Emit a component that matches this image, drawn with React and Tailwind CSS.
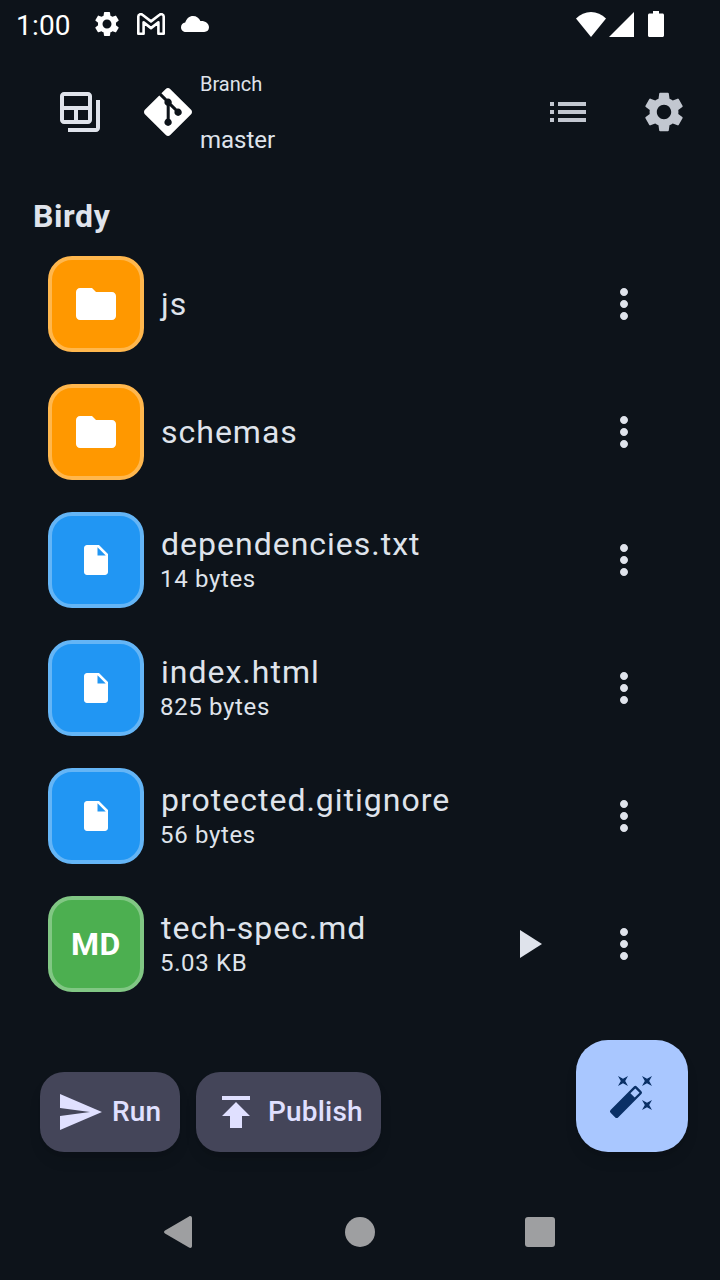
import React from 'react';
import {
  MdAutoFixHigh,
  MdFolder,
  MdInsertDriveFile,
  MdList,
  MdMoreVert,
  MdOutlineBackupTable,
  MdPlayArrow,
  MdPublish,
  MdSend,
  MdSettings
} from 'react-icons/md';
import { SiGit } from 'react-icons/si';

const files = [
  { name: 'js', type: 'folder' },
  { name: 'schemas', type: 'folder' },
  { name: 'dependencies.txt', type: 'file', size: '14 bytes' },
  { name: 'index.html', type: 'file', size: '825 bytes' },
  { name: 'protected.gitignore', type: 'file', size: '56 bytes' },
  { name: 'tech-spec.md', type: 'markdown', size: '5.03 KB' }
];

const tileStyles = {
  folder: 'bg-[#ff9800] border-[#ffb74d]',
  file: 'bg-[#2196f3] border-[#64b5f6]',
  markdown: 'bg-[#4caf50] border-[#81c784]'
};

function StatusBar() {
  return (
    <div className="flex h-12 items-center justify-between pl-4 pr-[55px] text-white">
      <div className="flex items-center">
        <span className="w-[76px] pt-1 text-[28px] leading-10 tracking-[0.2px]">1:00</span>
        <MdSettings size={30} />
        <svg className="ml-[15px]" width="28" height="22" viewBox="0 0 28 22" fill="none" stroke="currentColor" strokeWidth="2.6" strokeLinejoin="round">
          <path d="M1.3 3.6C1.3 1.3 3.8.5 5.4 1.8L14 8.4l8.6-6.6c1.6-1.3 4.1-.5 4.1 1.8v17.1h-5.3V9.4L14 15.1 6.6 9.4v11.3H1.3z" />
        </svg>
        <svg className="ml-4" width="28" height="16" viewBox="0 0 28 16" fill="currentColor">
          <path d="M5 16C2.2 16 0 13.9 0 11.2c0-2.5 1.8-4.4 4.2-4.7C5.4 2.7 8.4 0 12 0c3.5 0 6.2 2 7.4 5.1C24.3 4.8 28 7.4 28 11.3 28 14.1 26 16 23.2 16z" />
        </svg>
      </div>
      <div className="flex items-center">
        <svg width="30" height="25" viewBox="0 0 30 25" fill="currentColor">
          <path d="M15 25 0 6.5C4.2 2.3 9.4 0 15 0s10.8 2.3 15 6.5z" />
        </svg>
        <svg className="ml-[3px]" width="25" height="25" viewBox="0 0 25 25" fill="currentColor">
          <path d="M25 0v25H0z" />
        </svg>
        <svg className="ml-3.5 mr-px" width="16" height="26" viewBox="0 0 16 26" fill="currentColor">
          <path d="M5 0h6v2.5h3.5c.8 0 1.5.7 1.5 1.5v20.5c0 .8-.7 1.5-1.5 1.5h-13C.7 26 0 25.3 0 24.500V4c0-.8.7-1.5 1.5-1.5H5z" />
        </svg>
      </div>
    </div>
  );
}

function Header() {
  return (
    <header className="flex h-32 items-center pl-14 pr-8">
      <MdOutlineBackupTable size={48} className="text-[#dfe3eb]" />
      <SiGit size={48} className="ml-10 text-white" />
      <div className="ml-2 flex flex-col gap-6 text-[#dfe3eb]">
        <span className="text-xl leading-8">Branch</span>
        <span className="text-2xl leading-8">master</span>
      </div>
      <div className="ml-auto flex gap-12 text-[#c2c7d0]">
        <MdList size={48} />
        <MdSettings size={48} />
      </div>
    </header>
  );
}

function FileTile({ type }) {
  return (
    <div className={`flex h-24 w-24 items-center justify-center rounded-3xl border-4 text-white ${tileStyles[type]}`}>
      {type === 'folder' && <MdFolder size={48} />}
      {type === 'file' && <MdInsertDriveFile size={36} />}
      {type === 'markdown' && <span className="text-[32px] font-bold tracking-[0.5px]">MD</span>}
    </div>
  );
}

function FileRow({ file }) {
  return (
    <li className="flex h-24 items-center pl-12 pr-18">
      <FileTile type={file.type} />
      <div className="ml-4 flex flex-col">
        <span className="pl-px text-[32px] leading-10 tracking-[1px]">{file.name}</span>
        {file.size && <span className="pb-0.5 text-2xl leading-[30px] tracking-[0.65px]">{file.size}</span>}
      </div>
      <div className="ml-auto flex gap-12">
        {file.type === 'markdown' && <MdPlayArrow size={48} />}
        <MdMoreVert size={48} />
      </div>
    </li>
  );
}

function Actions() {
  return (
    <div className="flex items-end pt-12 pb-8 pl-10 pr-8">
      <button className="flex h-20 w-[140px] items-center gap-2 rounded-3xl bg-[#444559] pl-4 text-[28px] font-medium tracking-[0.2px] text-[#e0e0ff] shadow-lg">
        <MdSend size={48} />
        Run
      </button>
      <button className="ml-4 flex h-20 w-[185px] items-center gap-2 rounded-3xl bg-[#444559] pl-4 text-[28px] font-medium tracking-[0.2px] text-[#e0e0ff] shadow-lg">
        <MdPublish size={48} />
        Publish
      </button>
      <button className="ml-auto flex h-28 w-28 items-center justify-center rounded-[32px] bg-[#a9c7ff] text-[#0a3066] shadow-lg">
        <MdAutoFixHigh size={48} />
      </button>
    </div>
  );
}

function NavBar() {
  return (
    <nav className="flex h-24 items-center pl-[164px] text-[#9e9fa1]">
      <svg width="28" height="32" viewBox="0 0 28 32" fill="currentColor">
        <path d="M25 .4c1.5-.9 3-.1 3 1.6v28c0 1.7-1.5 2.5-3 1.6L1 17.5c-1.3-.8-1.3-2.2 0-3z" />
      </svg>
      <div className="ml-[153px] h-[30px] w-[30px] rounded-full bg-[#9e9fa1]"></div>
      <div className="ml-[150px] h-[30px] w-[30px] rounded-[3px] bg-[#9e9fa1]"></div>
    </nav>
  );
}

function App() {
  return (
    <div className="h-[1280px] w-[720px] overflow-hidden bg-[#0d131a] font-[Roboto,sans-serif] text-[#dfe3eb]">
      <StatusBar />
      <Header />
      <h1 className="flex h-20 items-center pl-[33px] text-[32px] font-bold tracking-[0.6px]">Birdy</h1>
      <ul className="flex flex-col gap-8">
        {files.map(file => (
          <FileRow key={file.name} file={file} />
        ))}
      </ul>
      <Actions />
      <NavBar />
    </div>
  );
}

export default App;
